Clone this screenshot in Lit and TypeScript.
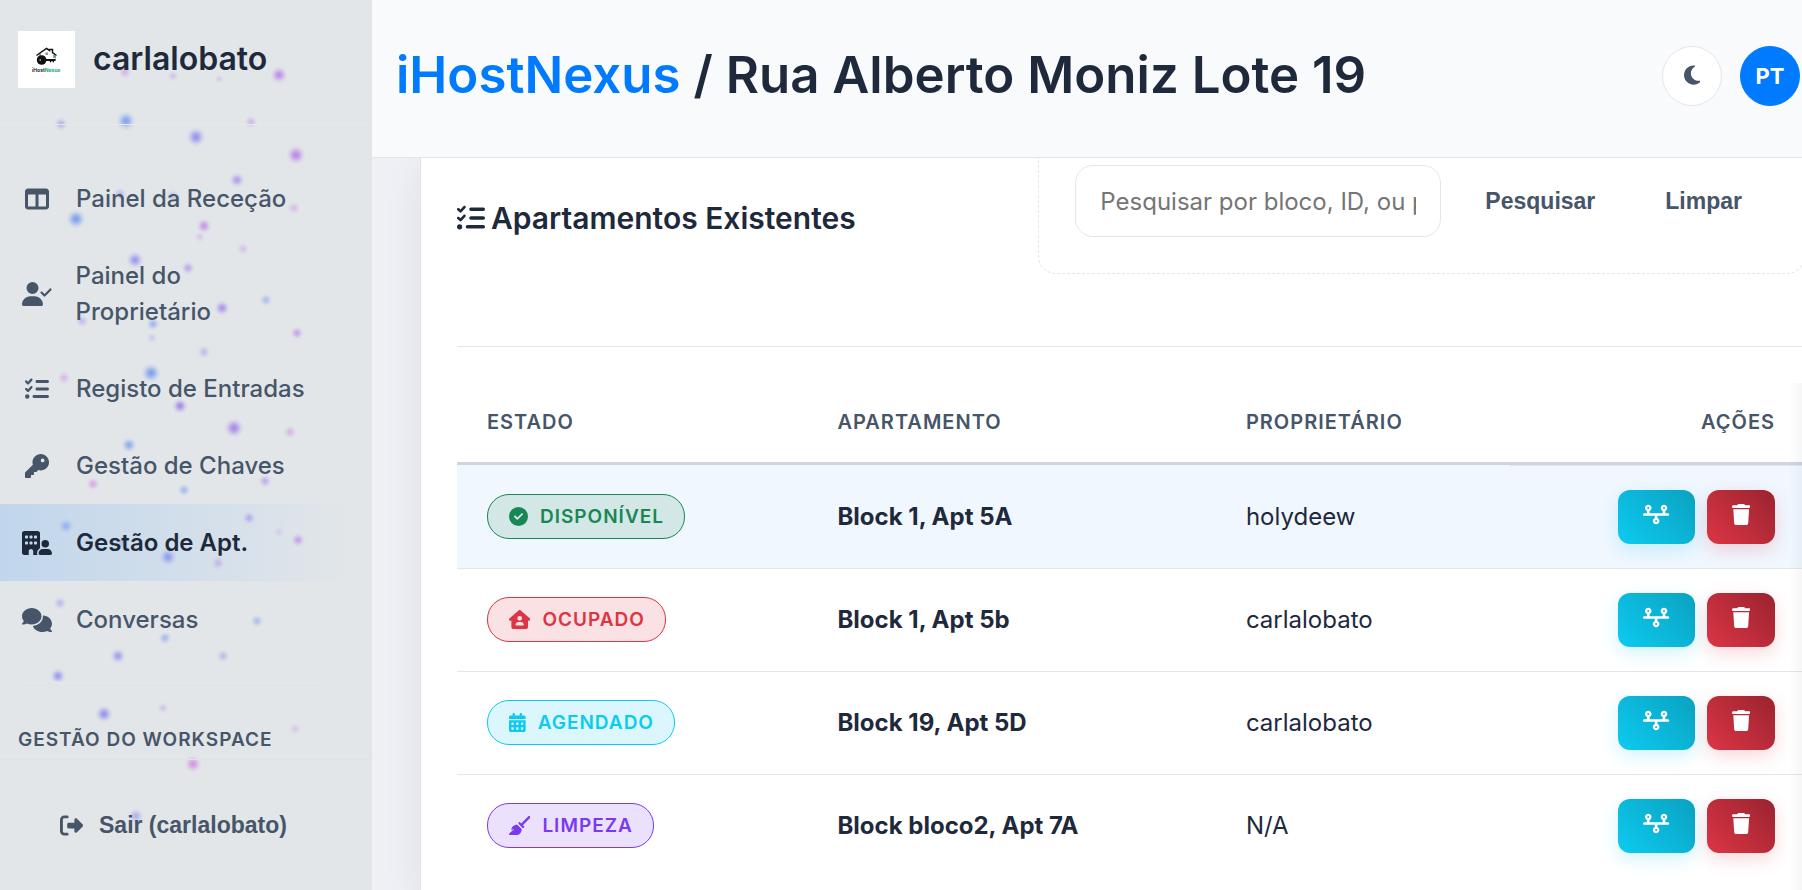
import { LitElement, html, css, svg } from "lit";
import { customElement, property } from "lit/decorators.js";

/* width of the view box and outline of each solid glyph, all 512 high */
const ICONS: Record<string, [number, string]> = {
  columns: [512, "M0 96C0 60.7 28.7 32 64 32H448c35.3 0 64 28.7 64 64V416c0 35.3-28.7 64-64 64H64c-35.3 0-64-28.7-64-64V96zm64 64V416H224V160H64zm384 0H288V416H448V160z"],
  userCheck: [640, "M96 128a128 128 0 1 1 256 0A128 128 0 1 1 96 128zM0 482.3C0 383.8 79.8 304 178.3 304h91.4C368.2 304 448 383.8 448 482.3c0 16.4-13.3 29.7-29.7 29.7H29.7C13.3 512 0 498.7 0 482.3zM625 177L497 305c-9.4 9.4-24.6 9.4-33.9 0l-64-64c-9.4-9.4-9.4-24.6 0-33.9s24.6-9.4 33.9 0l47 47L591 143c9.4-9.4 24.6-9.4 33.9 0s9.4 24.6 0 33.9z"],
  listCheck: [512, "M152.1 38.2c9.9 8.9 10.7 24 1.8 33.9l-72 80c-4.4 4.9-10.6 7.8-17.2 7.9s-12.9-2.4-17.6-7L7 113C-2.3 103.6-2.3 88.4 7 79s24.6-9.4 33.9 0l22.1 22.1 55.1-61.2c8.9-9.9 24-10.7 33.9-1.8zm0 160c9.9 8.9 10.7 24 1.8 33.9l-72 80c-4.4 4.9-10.6 7.8-17.2 7.9s-12.9-2.4-17.6-7L7 273c-9.4-9.4-9.4-24.6 0-33.9s24.6-9.4 33.9 0l22.1 22.1 55.1-61.2c8.9-9.9 24-10.7 33.9-1.8zM224 96c0-17.7 14.3-32 32-32H480c17.7 0 32 14.3 32 32s-14.3 32-32 32H256c-17.7 0-32-14.3-32-32zm0 160c0-17.7 14.3-32 32-32H480c17.7 0 32 14.3 32 32s-14.3 32-32 32H256c-17.7 0-32-14.3-32-32zM160 416c0-17.7 14.3-32 32-32H480c17.7 0 32 14.3 32 32s-14.3 32-32 32H192c-17.7 0-32-14.3-32-32zM48 368a48 48 0 1 1 0 96 48 48 0 1 1 0-96z"],
  key: [512, "M336 352c97.2 0 176-78.8 176-176S433.2 0 336 0S160 78.8 160 176c0 18.7 2.9 36.8 8.3 53.7L7 391c-4.5 4.5-7 10.6-7 17v80c0 13.3 10.7 24 24 24h80c13.3 0 24-10.7 24-24V448h40c13.3 0 24-10.7 24-24V384h40c6.4 0 12.5-2.5 17-7l33.3-33.3c16.9 5.4 35 8.3 53.7 8.3zM376 96a40 40 0 1 1 0 80 40 40 0 1 1 0-80z"],
  buildingUser: [640, "M48 0C21.5 0 0 21.5 0 48V464c0 26.5 21.5 48 48 48h96V432c0-26.5 21.5-48 48-48s48 21.5 48 48v80h89.9c-6.3-10.2-9.9-22.2-9.9-35.1c0-46.9 25.8-87.8 64-109.2V271.8 48c0-26.5-21.5-48-48-48H48zM64 240c0-8.8 7.2-16 16-16h32c8.8 0 16 7.2 16 16v32c0 8.8-7.2 16-16 16H80c-8.8 0-16-7.2-16-16V240zm112-16h32c8.8 0 16 7.2 16 16v32c0 8.8-7.2 16-16 16H176c-8.8 0-16-7.2-16-16V240c0-8.8 7.2-16 16-16zm80 16c0-8.8 7.2-16 16-16h32c8.8 0 16 7.2 16 16v32c0 8.8-7.2 16-16 16H272c-8.8 0-16-7.2-16-16V240zM80 96h32c8.8 0 16 7.2 16 16v32c0 8.8-7.2 16-16 16H80c-8.8 0-16-7.2-16-16V112c0-8.8 7.2-16 16-16zm80 16c0-8.8 7.2-16 16-16h32c8.8 0 16 7.2 16 16v32c0 8.8-7.2 16-16 16H176c-8.8 0-16-7.2-16-16V112zM272 96h32c8.8 0 16 7.2 16 16v32c0 8.8-7.2 16-16 16H272c-8.8 0-16-7.2-16-16V112c0-8.8 7.2-16 16-16zM576 272a80 80 0 1 0 -160 0 80 80 0 1 0 160 0zM352 477.1c0 19.3 15.6 34.9 34.9 34.9H605.1c19.3 0 34.9-15.6 34.9-34.9c0-51.4-41.7-93.1-93.1-93.1H445.1c-51.4 0-93.1 41.7-93.1 93.1z"],
  comments: [640, "M208 352c114.9 0 208-78.8 208-176S322.9 0 208 0S0 78.8 0 176c0 38.6 14.7 74.3 39.6 103.4c-3.5 9.4-8.7 17.7-14.2 24.7c-4.8 6.2-9.7 11-13.3 14.3c-1.8 1.6-3.3 2.9-4.3 3.7c-.5 .4-.9 .7-1.1 .8l-.2 .2C1 327.2-1.4 334.4 .8 340.9S9.1 352 16 352c21.8 0 43.8-5.6 62.1-12.5c9.2-3.5 17.8-7.4 25.2-11.4C134.1 343.3 169.8 352 208 352zM448 176c0 112.3-99.1 196.9-216.5 207C255.8 457.4 336.4 512 432 512c38.2 0 73.9-8.7 104.7-23.9c7.5 4 16 7.9 25.2 11.4c18.3 6.9 40.3 12.5 62.1 12.5c6.9 0 13.1-4.5 15.2-11.1c2.1-6.6-.2-13.8-5.8-17.9l-.2-.2c-.2-.2-.6-.4-1.1-.8c-1-.8-2.5-2-4.3-3.7c-3.6-3.3-8.5-8.1-13.3-14.3c-5.5-7-10.7-15.4-14.2-24.7c24.9-29 39.6-64.7 39.6-103.4c0-92.8-84.9-168.9-192.6-175.5c.4 5.1 .6 10.3 .6 15.5z"],
  signOut: [512, "M377.9 105.9L500.7 228.7c7.2 7.2 11.3 17.1 11.3 27.3s-4.1 20.1-11.3 27.3L377.9 406.1c-6.4 6.4-15 9.9-24 9.9c-18.7 0-33.9-15.2-33.9-33.9l0-62.1-128 0c-17.7 0-32-14.3-32-32l0-64c0-17.7 14.3-32 32-32l128 0 0-62.1c0-18.7 15.2-33.9 33.9-33.9c9 0 17.6 3.6 24 9.9zM160 96L96 96c-17.7 0-32 14.3-32 32l0 256c0 17.7 14.3 32 32 32l64 0c17.7 0 32 14.3 32 32s-14.3 32-32 32l-64 0c-53 0-96-43-96-96L0 128C0 75 43 32 96 32l64 0c17.7 0 32 14.3 32 32s-14.3 32-32 32z"],
  moon: [384, "M223.5 32C100 32 0 132.3 0 256S100 480 223.5 480c60.6 0 115.5-24.2 155.8-63.4c5-4.9 6.3-12.5 3.1-18.7s-10.1-9.7-17-8.5c-9.8 1.7-19.8 2.6-30.1 2.6c-96.9 0-175.5-78.8-175.5-176c0-65.8 36-123.1 89.3-153.3c6.1-3.5 9.2-10.5 7.7-17.3s-7.3-11.9-14.3-12.5c-6.3-.5-12.6-.8-19-.8z"],
  circleCheck: [512, "M256 512A256 256 0 1 0 256 0a256 256 0 1 0 0 512zM369 209L241 337c-9.4 9.4-24.6 9.4-33.9 0l-64-64c-9.4-9.4-9.4-24.6 0-33.9s24.6-9.4 33.9 0l47 47L335 175c9.4-9.4 24.6-9.4 33.9 0s9.4 24.6 0 33.9z"],
  houseUser: [576, "M575.8 255.5c0 18-15 32.1-32 32.1h-32l.7 160.2c.2 35.5-28.5 64.3-64 64.3H128.1c-35.3 0-64-28.7-64-64V287.6H32c-18 0-32-14-32-32.1c0-9 3-17 10-24L266.4 8c7-7 15-8 22-8s15 2 21 7L564.8 231.5c8 7 12 15 11 24zM352 224a64 64 0 1 0 -128 0 64 64 0 1 0 128 0zm-96 96c-44.2 0-80 35.8-80 80c0 8.8 7.2 16 16 16H384c8.8 0 16-7.2 16-16c0-44.2-35.8-80-80-80H256z"],
  calendar: [448, "M128 0c17.7 0 32 14.3 32 32V64H288V32c0-17.7 14.3-32 32-32s32 14.3 32 32V64h48c26.5 0 48 21.5 48 48v48H0V112C0 85.5 21.5 64 48 64H96V32c0-17.7 14.3-32 32-32zM0 192H448V464c0 26.5-21.5 48-48 48H48c-26.5 0-48-21.5-48-48V192zm64 80v32c0 8.8 7.2 16 16 16h32c8.8 0 16-7.2 16-16V272c0-8.8-7.2-16-16-16H80c-8.8 0-16 7.2-16 16zm128 0v32c0 8.8 7.2 16 16 16h32c8.8 0 16-7.2 16-16V272c0-8.8-7.2-16-16-16H208c-8.8 0-16 7.2-16 16zm144-16c-8.8 0-16 7.2-16 16v32c0 8.8 7.2 16 16 16h32c8.8 0 16-7.2 16-16V272c0-8.8-7.2-16-16-16H336zM64 400v32c0 8.8 7.2 16 16 16h32c8.8 0 16-7.2 16-16V400c0-8.8-7.2-16-16-16H80c-8.8 0-16 7.2-16 16zm144-16c-8.8 0-16 7.2-16 16v32c0 8.8 7.2 16 16 16h32c8.8 0 16-7.2 16-16V400c0-8.8-7.2-16-16-16H208zm112 16v32c0 8.8 7.2 16 16 16h32c8.8 0 16-7.2 16-16V400c0-8.8-7.2-16-16-16H336c-8.8 0-16 7.2-16 16z"],
  broom: [576, "M566.6 54.6c12.5-12.5 12.5-32.8 0-45.3s-32.8-12.5-45.3 0l-192 192-34.7-34.7c-4.2-4.2-10-6.6-16-6.6c-12.5 0-22.6 10.1-22.6 22.6v29.1L364.3 320h29.1c12.5 0 22.6-10.1 22.6-22.6c0-6-2.4-11.8-6.6-16l-34.7-34.7 192-192zM341.1 353.4L222.6 234.9c-42.7-3.7-85.2 11.7-115.8 42.3l-8 8C76.5 307.5 64 337.7 64 369.2c0 6.8 7.1 11.2 13.2 8.2l51.1-25.5c5-2.5 9.5 4.1 5.4 7.9L7.3 473.4C2.7 477.6 0 483.6 0 489.9C0 502.1 9.9 512 22.1 512l173.3 0c38.8 0 75.9-15.4 103.4-42.8c30.6-30.6 45.9-73.1 42.3-115.8z"],
  timeline: [640, "M128 72a24 24 0 1 1 0 48 24 24 0 1 1 0-48zm32 97.3c28.3-12.3 48-40.5 48-73.3c0-44.2-35.8-80-80-80S48 51.8 48 96c0 32.8 19.7 61 48 73.3V224H32c-17.7 0-32 14.3-32 32s14.3 32 32 32H288v54.7c-28.3 12.3-48 40.5-48 73.3c0 44.2 35.8 80 80 80s80-35.8 80-80c0-32.8-19.7-61-48-73.3V288H608c17.7 0 32-14.3 32-32s-14.3-32-32-32H544V169.3c28.3-12.3 48-40.5 48-73.3c0-44.2-35.8-80-80-80s-80 35.8-80 80c0 32.8 19.7 61 48 73.3V224H160V169.3zM488 96a24 24 0 1 1 48 0 24 24 0 1 1 -48 0zM320 392a24 24 0 1 1 0 48 24 24 0 1 1 0-48z"],
  trash: [448, "M135.2 17.7L128 32H32C14.3 32 0 46.3 0 64S14.3 96 32 96H416c17.7 0 32-14.3 32-32s-14.3-32-32-32H320l-7.2-14.3C307.4 6.8 296.3 0 284.2 0H163.8c-12.1 0-23.2 6.8-28.6 17.7zM416 128H32L53.2 467c1.6 25.3 22.6 45 47.9 45H346.9c25.3 0 46.3-19.7 47.9-45L416 128z"],
};

@customElement("app-icon")
class AppIcon extends LitElement {
  @property() name = "key";

  static styles = css`
    :host {
      display: inline-flex;
      flex: none;
    }
    .glyph {
      display: block;
      height: 1em;
      width: auto;
      fill: currentColor;
    }
  `;

  render() {
    const [width, path] = ICONS[this.name];
    return html`<svg class="glyph" viewBox="0 0 ${width} 512" aria-hidden="true"><path d=${path}></path></svg>`;
  }
}

/* x, y, radius, hue, strength */
type Particle = [number, number, number, string, number];

const PARTICLES: Particle[] = [
  [125, 72, 7, "pink", 0.5], [173, 76, 6, "violet", 0.3], [219, 79, 5, "purple", 0.25], [279, 75, 9, "purple", 0.8],
  [61, 124, 7, "indigo", 0.5], [126, 121, 10, "blue", 0.8], [251, 122, 7, "purple", 0.4], [196, 137, 10, "indigo", 0.8],
  [296, 155, 10, "purple", 0.85], [237, 180, 8, "violet", 0.65], [294, 208, 7, "pink", 0.4], [120, 194, 7, "indigo", 0.4],
  [173, 196, 7, "indigo", 0.35], [76, 219, 10, "blue", 0.85], [204, 226, 8, "purple", 0.7], [200, 237, 6, "purple", 0.25],
  [243, 249, 7, "purple", 0.3], [135, 260, 9, "indigo", 0.75], [188, 268, 7, "violet", 0.55], [266, 300, 7, "blue", 0.45],
  [222, 308, 8, "violet", 0.75], [82, 321, 7, "violet", 0.4], [153, 324, 7, "blue", 0.55], [152, 338, 6, "violet", 0.25],
  [297, 333, 7, "purple", 0.6], [204, 352, 7, "violet", 0.4], [151, 373, 10, "blue", 0.85], [64, 378, 7, "pink", 0.45],
  [180, 406, 8, "violet", 0.85], [234, 428, 10, "violet", 0.85], [290, 432, 7, "pink", 0.5], [129, 445, 8, "blue", 0.7],
  [93, 484, 7, "pink", 0.6], [184, 490, 7, "blue", 0.5], [265, 481, 7, "violet", 0.5], [66, 526, 8, "blue", 0.5],
  [249, 518, 7, "violet", 0.5], [279, 532, 6, "purple", 0.2], [298, 540, 7, "purple", 0.6], [122, 543, 7, "indigo", 0.3],
  [168, 557, 9, "indigo", 0.7], [218, 563, 7, "purple", 0.4], [60, 603, 7, "indigo", 0.4], [257, 621, 7, "blue", 0.45],
  [165, 638, 7, "blue", 0.5], [118, 656, 8, "indigo", 0.7], [223, 656, 7, "violet", 0.4], [58, 676, 8, "indigo", 0.75],
  [104, 714, 9, "indigo", 0.8], [163, 708, 6, "violet", 0.3], [295, 729, 7, "purple", 0.25], [193, 764, 9, "pink", 0.8],
  [136, 816, 8, "indigo", 0.5],
];

const HUES: Record<string, string> = {
  blue: "#5b85ee",
  indigo: "#7470ee",
  violet: "#9166ea",
  purple: "#ad66e6",
  pink: "#cc72e2",
};

@customElement("particle-field")
class ParticleField extends LitElement {
  static styles = css`
    :host {
      display: block;
      pointer-events: none;
    }
    .field {
      display: block;
      overflow: visible;
    }
  `;

  render() {
    return html`
      <svg class="field" width="372" height="890" aria-hidden="true">
        <defs>
          ${Object.entries(HUES).map(([id, color]) => svg`
            <radialGradient id=${id}>
              <stop offset="0" stop-color=${color} stop-opacity="0.9"></stop>
              <stop offset="0.3" stop-color=${color} stop-opacity="0.65"></stop>
              <stop offset="0.7" stop-color=${color} stop-opacity="0.16"></stop>
              <stop offset="1" stop-color=${color} stop-opacity="0"></stop>
            </radialGradient>`)}
        </defs>
        ${PARTICLES.map(([x, y, r, hue, strength]) => svg`<circle cx=${x} cy=${y} r=${r} fill="url(#${hue})" opacity=${strength}></circle>`)}
      </svg>
    `;
  }
}

const NAV = [
  { icon: "columns", label: "Painel da Receção" },
  { icon: "userCheck", label: "Painel do Proprietário" },
  { icon: "listCheck", label: "Registo de Entradas" },
  { icon: "key", label: "Gestão de Chaves" },
  { icon: "buildingUser", label: "Gestão de Apt.", active: true },
  { icon: "comments", label: "Conversas" },
];

@customElement("app-sidebar")
class AppSidebar extends LitElement {
  static styles = css`
    :host {
      position: relative;
      display: flex;
      flex-direction: column;
      box-sizing: border-box;
      background: #e2e6e9;
      border-right: 2px solid #e3e5e9;
      overflow: hidden;
    }
    .particles {
      position: absolute;
      top: 0;
      left: 0;
    }
    .brand {
      position: relative;
      display: flex;
      align-items: center;
      gap: 18px;
      padding: 31px 18px 36px;
      border-bottom: 1px solid #e6e8ea;
    }
    .logo {
      display: block;
      flex: none;
      background: #fff;
    }
    .logo-text {
      font: 700 5px Inter, sans-serif;
      fill: #1c1c1c;
    }
    .logo-text-accent {
      fill: #16a56b;
    }
    .name {
      padding-bottom: 2px;
      font-size: 32px;
      font-weight: 600;
      line-height: 36px;
      color: #1e293b;
    }
    .nav {
      position: relative;
      flex: 1;
      padding: 35px 16px 0 0;
    }
    .list {
      list-style: none;
      margin: 0;
      padding: 0;
    }
    .link {
      display: flex;
      align-items: center;
      gap: 20px;
      padding: 21px 34px 20px 18px;
      font-size: 24px;
      font-weight: 500;
      line-height: 36px;
      color: #475569;
      text-decoration: none;
    }
    .link.active {
      font-weight: 600;
      color: #1e293b;
      background: linear-gradient(90deg, rgba(0, 123, 255, 0.15), rgba(0, 123, 255, 0));
    }
    .link-icon {
      display: flex;
      justify-content: center;
      width: 38px;
    }
    .section {
      margin: 24px 34px 0 18px;
      padding: 43px 0 5px;
      border-top: 1px solid #e6e8ea;
      font-size: 19px;
      font-weight: 600;
      line-height: 28px;
      letter-spacing: 1px;
      color: #475569;
      white-space: nowrap;
    }
    .foot {
      position: relative;
      padding: 35px 36px 36px;
      border-top: 1px solid #e0e3e6;
    }
    .logout {
      display: flex;
      align-items: center;
      gap: 16px;
      height: 60px;
      padding: 0 24px;
      border: 0;
      background: none;
      color: #475569;
      font: 700 23px/36px "Liberation Sans", Arial, sans-serif;
      white-space: nowrap;
    }
  `;

  render() {
    return html`
      <particle-field class="particles"></particle-field>
      <header class="brand">
        <svg class="logo" width="57" height="57" viewBox="0 0 57 57" role="img" aria-label="iHostNexus">
          <path d="M18.5 24.5 28.5 17.5 31.5 19.4V18.4H34.5V21.6L38.5 24.5" fill="none" stroke="#161616" stroke-width="1.5"></path>
          <path d="M22 22.6V26M36 23.6V27" stroke="#3f3f3f" stroke-width="1" fill="none"></path>
          <path d="M37.3 24.5V27.5" stroke="#16a56b" stroke-width="1"></path>
          <path d="M27.5 21.5h2.4v2.4h-2.4z" fill="#8b8b8b"></path>
          <circle cx="23.6" cy="29" r="4.8" fill="#111"></circle>
          <circle cx="22.2" cy="29" r="0.8" fill="#ddd"></circle>
          <path d="M27 28h10.6v2H36v1.2h-1.4V30h-1.2v1.2h-1.6V30H27z" fill="#111"></path>
          <text class="logo-text" x="14" y="40.5">iHost<tspan class="logo-text-accent">Nexus</tspan></text>
        </svg>
        <span class="name">carlalobato</span>
      </header>
      <nav class="nav">
        <ul class="list">
          ${NAV.map((item) => html`
            <li>
              <a class="link ${item.active ? "active" : ""}" href="#">
                <span class="link-icon"><app-icon name=${item.icon}></app-icon></span>
                <span>${item.label}</span>
              </a>
            </li>`)}
        </ul>
        <div class="section">GESTÃO DO WORKSPACE</div>
      </nav>
      <footer class="foot">
        <button class="logout" type="button"><app-icon name="signOut"></app-icon>Sair (carlalobato)</button>
      </footer>
    `;
  }
}

const ROWS = [
  { tone: "free", icon: "circleCheck", state: "DISPONÍVEL", flat: "Block 1, Apt 5A", owner: "holydeew" },
  { tone: "busy", icon: "houseUser", state: "OCUPADO", flat: "Block 1, Apt 5b", owner: "carlalobato" },
  { tone: "booked", icon: "calendar", state: "AGENDADO", flat: "Block 19, Apt 5D", owner: "carlalobato" },
  { tone: "cleaning", icon: "broom", state: "LIMPEZA", flat: "Block bloco2, Apt 7A", owner: "N/A" },
];

@customElement("apartment-card")
class ApartmentCard extends LitElement {
  static styles = css`
    :host {
      display: block;
      box-sizing: border-box;
      padding: 0 36px;
      background: #fff;
      border-left: 1px solid #e3e5ea;
      box-shadow: 0 12px 36px rgba(30, 41, 59, 0.08);
    }
    .top {
      display: flex;
      align-items: center;
      justify-content: space-between;
      padding-bottom: 72px;
      border-bottom: 1px solid #e4e6eb;
    }
    .title {
      display: flex;
      align-items: center;
      gap: 6px;
      margin: 0;
      padding-top: 3px;
      font-size: 30px;
      font-weight: 600;
      line-height: 36px;
      color: #1e293b;
    }
    .title-icon {
      font-size: 28px;
    }
    .search {
      display: flex;
      align-items: center;
      gap: 18px;
      padding: 7px 36px 36px;
      border: 1px dashed #e4e6ea;
      border-top: 0;
      border-radius: 0 0 18px 18px;
    }
    .query {
      box-sizing: border-box;
      width: 366px;
      height: 72px;
      padding: 0 24px;
      border: 1px solid #e4e6ea;
      border-radius: 18px;
      background: #fff;
      color: #1e293b;
      font: 400 24px Inter, sans-serif;
    }
    .query::placeholder {
      color: #757575;
    }
    .plain {
      height: 60px;
      padding: 0 26px;
      border: 0;
      background: none;
      color: #475569;
      font: 700 23px/36px "Liberation Sans", Arial, sans-serif;
    }
    .scroller {
      position: relative;
      margin-top: 36px;
      padding-bottom: 36px;
    }
    .scroller::after {
      content: "";
      position: absolute;
      top: 0;
      right: 0;
      bottom: 0;
      width: 16px;
      background: linear-gradient(90deg, rgba(30, 41, 59, 0), rgba(30, 41, 59, 0.05));
      pointer-events: none;
    }
    .grid {
      width: 100%;
      table-layout: fixed;
      border-collapse: separate;
      border-spacing: 0;
      color: #1e293b;
      font-size: 24px;
      line-height: 36px;
    }
    .col-state {
      width: 26%;
    }
    .col-flat {
      width: 30.3%;
    }
    .head {
      height: 82px;
      padding: 0 30px 2px;
      box-sizing: border-box;
      border-bottom: 3px solid #cfd4dd;
      color: #475569;
      font-size: 20px;
      font-weight: 600;
      letter-spacing: 1px;
      text-align: left;
    }
    .head.end {
      text-align: right;
    }
    .cell {
      height: 103px;
      padding: 0 30px 1px;
      border-top: 1px solid #e4e6eb;
      box-sizing: border-box;
    }
    .first .cell {
      border-top-color: #f0f7ff;
      background: #f0f7ff;
    }
    .first .cell.end {
      border-top-color: #e0e5ec;
    }
    .flat {
      font-weight: 700;
    }
    .actions {
      display: flex;
      justify-content: flex-end;
      gap: 12px;
    }
    .action {
      display: flex;
      align-items: center;
      justify-content: center;
      height: 54px;
      padding: 0 25px 4px;
      border: 0;
      border-radius: 12px;
      color: #fff;
      font-size: 21px;
    }
    .open {
      background: linear-gradient(45deg, #0dcaf0, #0aa2c0);
      box-shadow: 0 6px 18px rgba(13, 202, 240, 0.2);
    }
    .remove {
      background: linear-gradient(45deg, #dc3545, #9a232f);
      box-shadow: 0 6px 18px rgba(220, 53, 69, 0.2);
    }
    .badge {
      display: inline-flex;
      align-items: center;
      gap: 12px;
      box-sizing: border-box;
      height: 45px;
      padding: 0 20px 0 21px;
      border: 1px solid currentColor;
      border-radius: 22px;
      font-size: 19px;
      font-weight: 600;
      letter-spacing: 1px;
      vertical-align: middle;
    }
    .free {
      color: #198754;
      background: #d3e7e6;
    }
    .busy {
      color: #dc3545;
      background: #fae1e3;
    }
    .booked {
      color: #0dcaf0;
      background: #dbf7fd;
    }
    .cleaning {
      color: #7c3aed;
      background: #ebe1fc;
    }
  `;

  render() {
    return html`
      <div class="top">
        <h2 class="title"><app-icon class="title-icon" name="listCheck"></app-icon>Apartamentos Existentes</h2>
        <form class="search" @submit=${(e: Event) => e.preventDefault()}>
          <input class="query" type="text" aria-label="Pesquisar" placeholder="Pesquisar por bloco, ID, ou proprietário" />
          <button class="plain" type="submit">Pesquisar</button>
          <button class="plain" type="reset">Limpar</button>
        </form>
      </div>
      <div class="scroller">
        <table class="grid">
          <colgroup>
            <col class="col-state" />
            <col class="col-flat" />
            <col />
            <col />
          </colgroup>
          <thead>
            <tr>
              <th class="head" scope="col">ESTADO</th>
              <th class="head" scope="col">APARTAMENTO</th>
              <th class="head" scope="col">PROPRIETÁRIO</th>
              <th class="head end" scope="col">AÇÕES</th>
            </tr>
          </thead>
          <tbody>
            ${ROWS.map((row, i) => html`
              <tr class=${i === 0 ? "first" : ""}>
                <td class="cell"><span class="badge ${row.tone}"><app-icon name=${row.icon}></app-icon>${row.state}</span></td>
                <td class="cell flat">${row.flat}</td>
                <td class="cell">${row.owner}</td>
                <td class="cell end">
                  <div class="actions">
                    <button class="action open" type="button" aria-label="Cronologia"><app-icon name="timeline"></app-icon></button>
                    <button class="action remove" type="button" aria-label="Eliminar"><app-icon name="trash"></app-icon></button>
                  </div>
                </td>
              </tr>`)}
          </tbody>
        </table>
      </div>
    `;
  }
}

@customElement("app-root")
class AppRoot extends LitElement {
  static styles = css`
    :host {
      display: grid;
      grid-template-columns: 372px minmax(0, 1fr);
      height: 100vh;
      overflow: hidden;
      background: #eff0f5;
      font-family: Inter, sans-serif;
    }
    .page {
      display: flex;
      flex-direction: column;
      min-width: 0;
      overflow: hidden;
    }
    .bar {
      position: relative;
      z-index: 1;
      display: flex;
      align-items: center;
      gap: 18px;
      box-sizing: border-box;
      flex: none;
      height: 158px;
      padding: 0 2px 6px 24px;
      background: #f9fafc;
      border-bottom: 1px solid #e3e5ea;
    }
    .heading {
      flex: 1;
      margin: 0;
      padding-bottom: 2px;
      color: #1e293b;
      font-size: 51px;
      font-weight: 600;
      line-height: 60px;
      white-space: nowrap;
    }
    .home {
      color: #007bff;
      text-decoration: none;
    }
    .round {
      display: flex;
      align-items: center;
      justify-content: center;
      flex: none;
      box-sizing: border-box;
      width: 60px;
      height: 60px;
      padding: 0 0 2px;
      border: 1px solid #e4e6ea;
      border-radius: 50%;
      background: #fff;
      color: #475569;
      font: 700 22px Inter, sans-serif;
    }
    .lang {
      padding: 0;
      border-color: #007bff;
      background: #007bff;
      color: #fff;
    }
    .body {
      flex: 1;
      min-height: 0;
      overflow: hidden;
      padding-left: 48px;
    }
    .card {
      height: 100%;
      margin-right: -39px;
    }
  `;

  render() {
    return html`
      <app-sidebar></app-sidebar>
      <div class="page">
        <header class="bar">
          <h1 class="heading"><a class="home" href="#">iHostNexus</a> / Rua Alberto Moniz Lote 19</h1>
          <button class="round" type="button" aria-label="Tema escuro"><app-icon name="moon"></app-icon></button>
          <button class="round lang" type="button">PT</button>
        </header>
        <main class="body">
          <apartment-card class="card"></apartment-card>
        </main>
      </div>
    `;
  }
}
